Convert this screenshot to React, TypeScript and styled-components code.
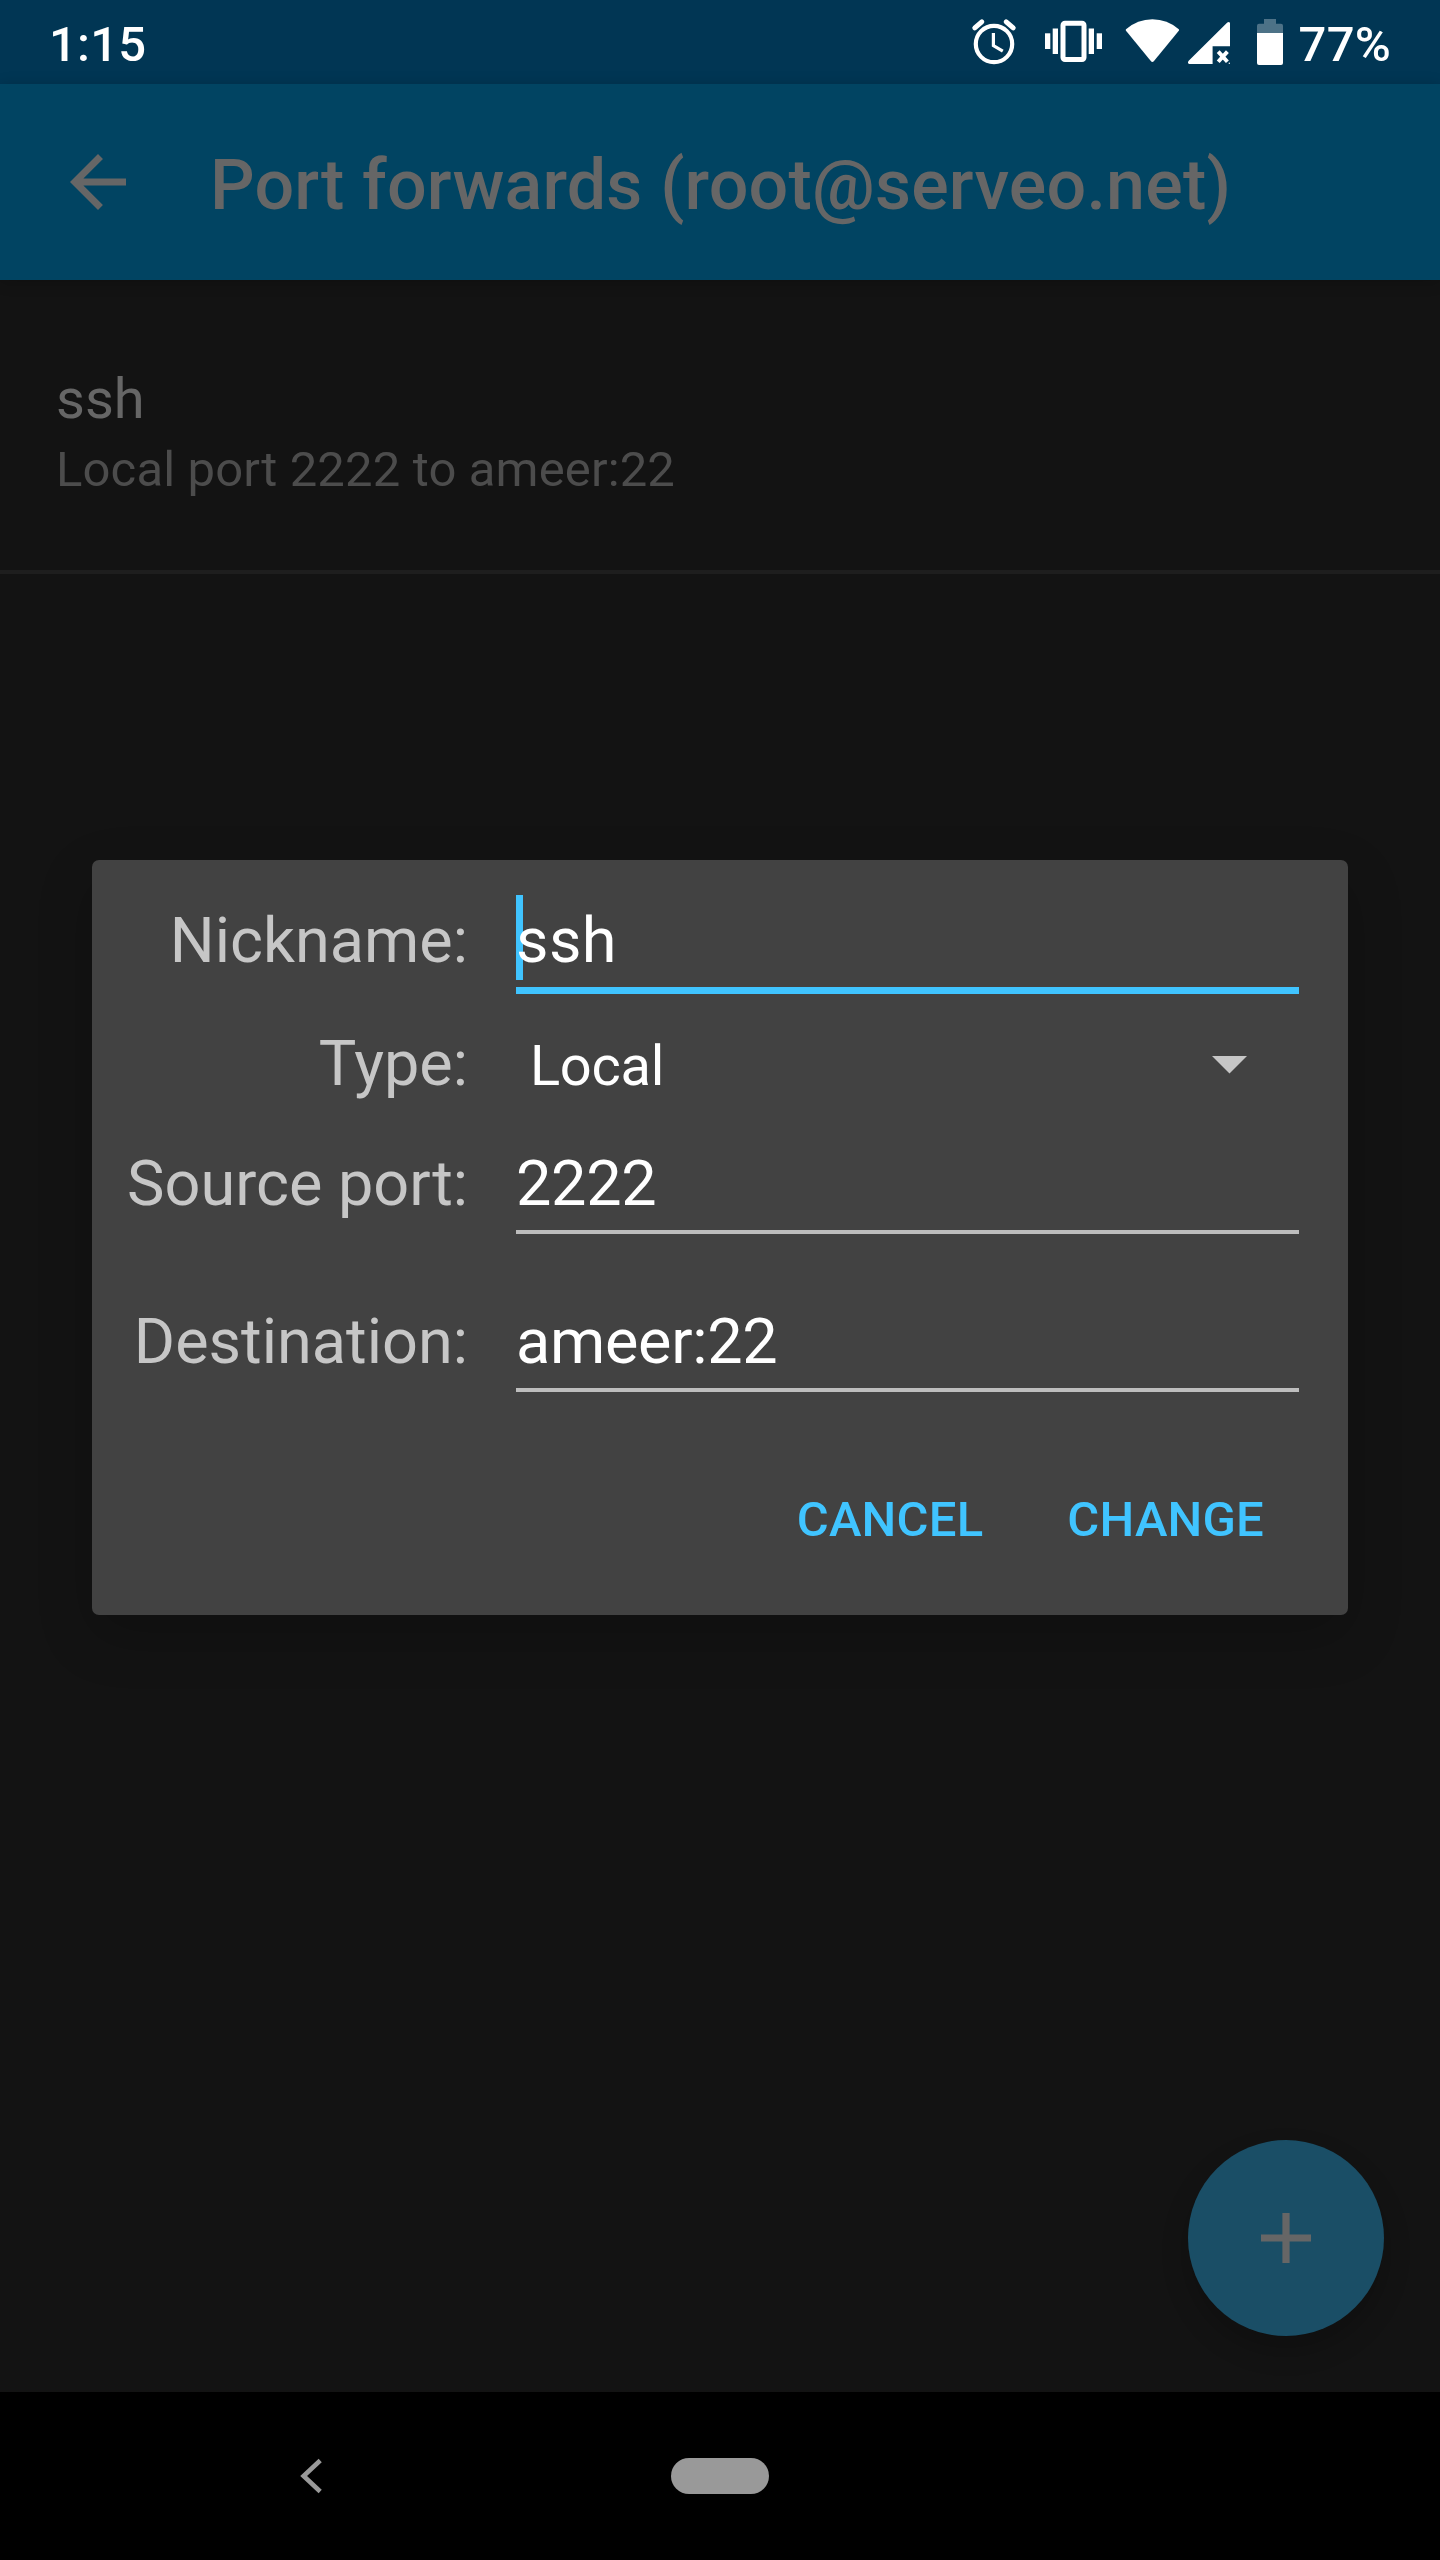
import React from "react";
import styled, { createGlobalStyle } from "styled-components";

const GlobalStyle = createGlobalStyle`
  * { box-sizing: border-box; }
  html, body { margin: 0; padding: 0; background: #131313; }
  body { font-family: Roboto, "Liberation Sans", sans-serif; overflow: hidden; }
`;

const Screen = styled.div`
  position: relative;
  width: 1440px;
  height: 2560px;
  display: flex;
  flex-direction: column;
  background: #131313;
  overflow: hidden;
`;

const StatusBar = styled.header`
  flex: none;
  height: 84px;
  padding: 16px 49px 0 49px;
  display: flex;
  justify-content: space-between;
  align-items: flex-start;
  background: #013654;
`;

const StatusText = styled.span`
  font-size: 49px;
  line-height: 57px;
  font-weight: 500;
  letter-spacing: 0.2px;
  color: #fff;
  white-space: nowrap;
`;

const StatusRight = styled.div`
  display: flex;
  align-items: flex-start;
`;

const StatusIcon = styled.svg<{ $gap: number }>`
  display: block;
  height: 52px;
  margin-right: ${(p) => p.$gap}px;
`;

const Toolbar = styled.div`
  flex: none;
  height: 196px;
  padding: 60px 0 0 56px;
  display: flex;
  align-items: flex-start;
  background: #014462;
  box-shadow: 0 2px 14px rgba(0, 0, 0, 0.2);
`;

const BackArrow = styled.svg`
  display: block;
  width: 84px;
  height: 84px;
  margin: -4px 70px 0 0;
`;

const Title = styled.h1`
  margin: 0;
  font-size: 70px;
  line-height: 82px;
  font-weight: 500;
  letter-spacing: 0.19px;
  color: #666;
  white-space: nowrap;
`;

const List = styled.main`
  flex: 1;
`;

const ListItem = styled.div`
  height: 294px;
  padding: 86px 56px 0;
  display: flex;
  flex-direction: column;
  gap: 9px;
  border-bottom: 4px solid #1e1e1e;
`;

const ItemTitle = styled.div`
  font-size: 56px;
  line-height: 66px;
  color: #666;
`;

const ItemDetail = styled.div`
  font-size: 49px;
  line-height: 57px;
  letter-spacing: 0.14px;
  color: #4c4c4c;
`;

const Fab = styled.button`
  position: absolute;
  right: 56px;
  bottom: 224px;
  width: 196px;
  height: 196px;
  padding: 0;
  border: 0;
  border-radius: 50%;
  display: flex;
  align-items: center;
  justify-content: center;
  background: #1a4e66;
  box-shadow: 0 14px 28px rgba(0, 0, 0, 0.2);
`;

const NavBar = styled.nav`
  flex: none;
  height: 168px;
  display: grid;
  grid-template-columns: 671px 98px 1fr;
  align-items: center;
  background: #000;
`;

const NavBack = styled.svg`
  display: block;
  width: 22px;
  height: 36px;
  margin-left: 300px;
`;

const NavPill = styled.div`
  height: 36px;
  border-radius: 18px;
  background: #999;
`;

const Dialog = styled.section`
  position: absolute;
  left: 92px;
  top: 860px;
  width: 1256px;
  height: 755px;
  display: flex;
  flex-direction: column;
  border-radius: 7px;
  background: #424242;
  box-shadow: 0 20px 56px rgba(0, 0, 0, 0.2);
`;

const FormRow = styled.div<{ $height: number; $top: number }>`
  height: ${(p) => p.$height}px;
  padding: ${(p) => p.$top}px 49px 0 0;
  display: grid;
  grid-template-columns: 376px 783px;
  column-gap: 48px;
  align-items: start;
`;

const Label = styled.label`
  font-size: 63px;
  line-height: 73px;
  text-align: right;
  color: #c6c6c6;
  white-space: nowrap;
`;

const Field = styled.div<{ $focused?: boolean }>`
  position: relative;
  z-index: 0;
  height: ${(p) => (p.$focused ? 90 : 87)}px;
  border-bottom: ${(p) => (p.$focused ? "7px solid #40c4ff" : "4px solid #bdbdbd")};
  font-size: 63px;
  line-height: 73px;
  letter-spacing: ${(p) => (p.$focused ? 0.4 : -0.3)}px;
  color: #fff;
`;

const Caret = styled.span`
  position: absolute;
  z-index: -1;
  left: 0;
  top: -9px;
  width: 7px;
  height: 85px;
  background: #40c4ff;
`;

const Select = styled.div`
  display: flex;
  justify-content: space-between;
  padding: 6px 52px 0 14px;
  font-size: 56px;
  line-height: 66px;
  letter-spacing: -0.3px;
  color: #fff;
`;

const DropArrow = styled.svg`
  display: block;
  width: 35px;
  height: 18px;
  margin-top: 23px;
`;

const Actions = styled.div`
  flex: 1;
  padding: 71px 56px 0 0;
  display: flex;
  justify-content: flex-end;
  align-items: flex-start;
  gap: 28px;
`;

const TextButton = styled.button`
  padding: 0 28px;
  border: 0;
  background: transparent;
  font-family: inherit;
  font-size: 49px;
  line-height: 57px;
  font-weight: 500;
  letter-spacing: 0.2px;
  color: #40c4ff;
`;

function StatusIcons() {
  return (
    <>
      <StatusIcon $gap={27} width="46" viewBox="971 16 46 52" fill="none" stroke="#fff">
        <circle cx="994" cy="44" r="18.2" strokeWidth="4.2" />
        <path d="M993.4 33v12.6l9.4 5.6" strokeWidth="3.2" />
        <path d="M974.8 27.800l7-5.900M1013.200 27.800l-7-5.900" strokeWidth="5" strokeLinecap="round" />
      </StatusIcon>
      <StatusIcon $gap={22} width="59" viewBox="1044 16 59 52" fill="#fff">
        <rect x="1045" y="33.3" width="5.3" height="15.7" />
        <rect x="1052.7" y="28.5" width="5.3" height="25.5" />
        <rect x="1063" y="23.2" width="21" height="36.3" rx="2" fill="none" stroke="#fff" strokeWidth="5" />
        <rect x="1088.7" y="28.5" width="5.3" height="25.5" />
        <rect x="1096.7" y="33.3" width="5.3" height="15.7" />
      </StatusIcon>
      <StatusIcon $gap={7} width="55" viewBox="1125 16 55 52" fill="#fff">
        <path d="M1126 29.3Q1137.500 19.300 1152.400 19.300Q1167.300 19.300 1178.800 29.300Q1179.400 30 1178.800 30.800L1154 61Q1152.400 62.800 1150.800 61L1126 30.800Q1125.400 30 1126 29.300Z" />
      </StatusIcon>
      <StatusIcon $gap={26} width="44" viewBox="1187 16 44 52" fill="#fff">
        <path d="M1230 24v22.200h-17.400V64h-23.300q-2.400-1.100-.6-3.300L1227.300 22.600q1.900-1.500 2.700.4z" />
        <path d="M1218.200 51.600l9.200 10.200M1227.400 51.600l-9.200 10.200" stroke="#fff" strokeWidth="3.900" fill="none" />
        <circle cx="1229.300" cy="63.300" r="0.700" />
      </StatusIcon>
      <StatusIcon $gap={15.500} width="26" viewBox="1257 16 26 52" fill="#fff">
        <path d="M1264 19h12v4.700h5q2 0 2 2V33h-26v-7.300q0-2 2-2h5z" opacity="0.300" />
        <path d="M1257 33h26v30q0 2-2 2h-22q-2 0-2-2z" />
      </StatusIcon>
    </>
  );
}

export default function App() {
  return (
    <Screen>
      <GlobalStyle />
      <StatusBar>
        <StatusText>1:15</StatusText>
        <StatusRight>
          <StatusIcons />
          <StatusText>77%</StatusText>
        </StatusRight>
      </StatusBar>
      <Toolbar>
        <BackArrow viewBox="0 0 24 24" fill="#666">
          <path d="M20 11H7.830l5.590-5.590L12 4l-8 8 8 8 1.410-1.410L7.830 13H20v-2z" />
        </BackArrow>
        <Title>Port forwards (root@serveo.net)</Title>
      </Toolbar>
      <List>
        <ListItem>
          <ItemTitle>ssh</ItemTitle>
          <ItemDetail>Local port 2222 to ameer:22</ItemDetail>
        </ListItem>
      </List>
      <NavBar>
        <NavBack viewBox="0 0 22 36" fill="none" stroke="#999" strokeWidth="4.600">
          <path d="M20.200 2.500L3.600 18l16.600 15.500" />
        </NavBack>
        <NavPill />
      </NavBar>
      <Fab aria-label="Add">
        <svg width="50" height="50" viewBox="0 0 50 50" fill="#666">
          <path d="M21.400 0h7.200v21.400H50v7.200H28.600V50h-7.200V28.600H0v-7.200h21.400z" />
        </svg>
      </Fab>
      <Dialog role="dialog">
        <FormRow $height={144} $top={44}>
          <Label>Nickname:</Label>
          <Field $focused>
            <Caret />
            ssh
          </Field>
        </FormRow>
        <FormRow $height={126} $top={23}>
          <Label>Type:</Label>
          <Select>
            Local
            <DropArrow viewBox="0 0 35 18" fill="#c6c6c6">
              <path d="M0 0h35L17.500 17.500z" />
            </DropArrow>
          </Select>
        </FormRow>
        <FormRow $height={150} $top={17}>
          <Label>Source port:</Label>
          <Field>2222</Field>
        </FormRow>
        <FormRow $height={140} $top={25}>
          <Label>Destination:</Label>
          <Field>ameer:22</Field>
        </FormRow>
        <Actions>
          <TextButton>CANCEL</TextButton>
          <TextButton>CHANGE</TextButton>
        </Actions>
      </Dialog>
    </Screen>
  );
}
